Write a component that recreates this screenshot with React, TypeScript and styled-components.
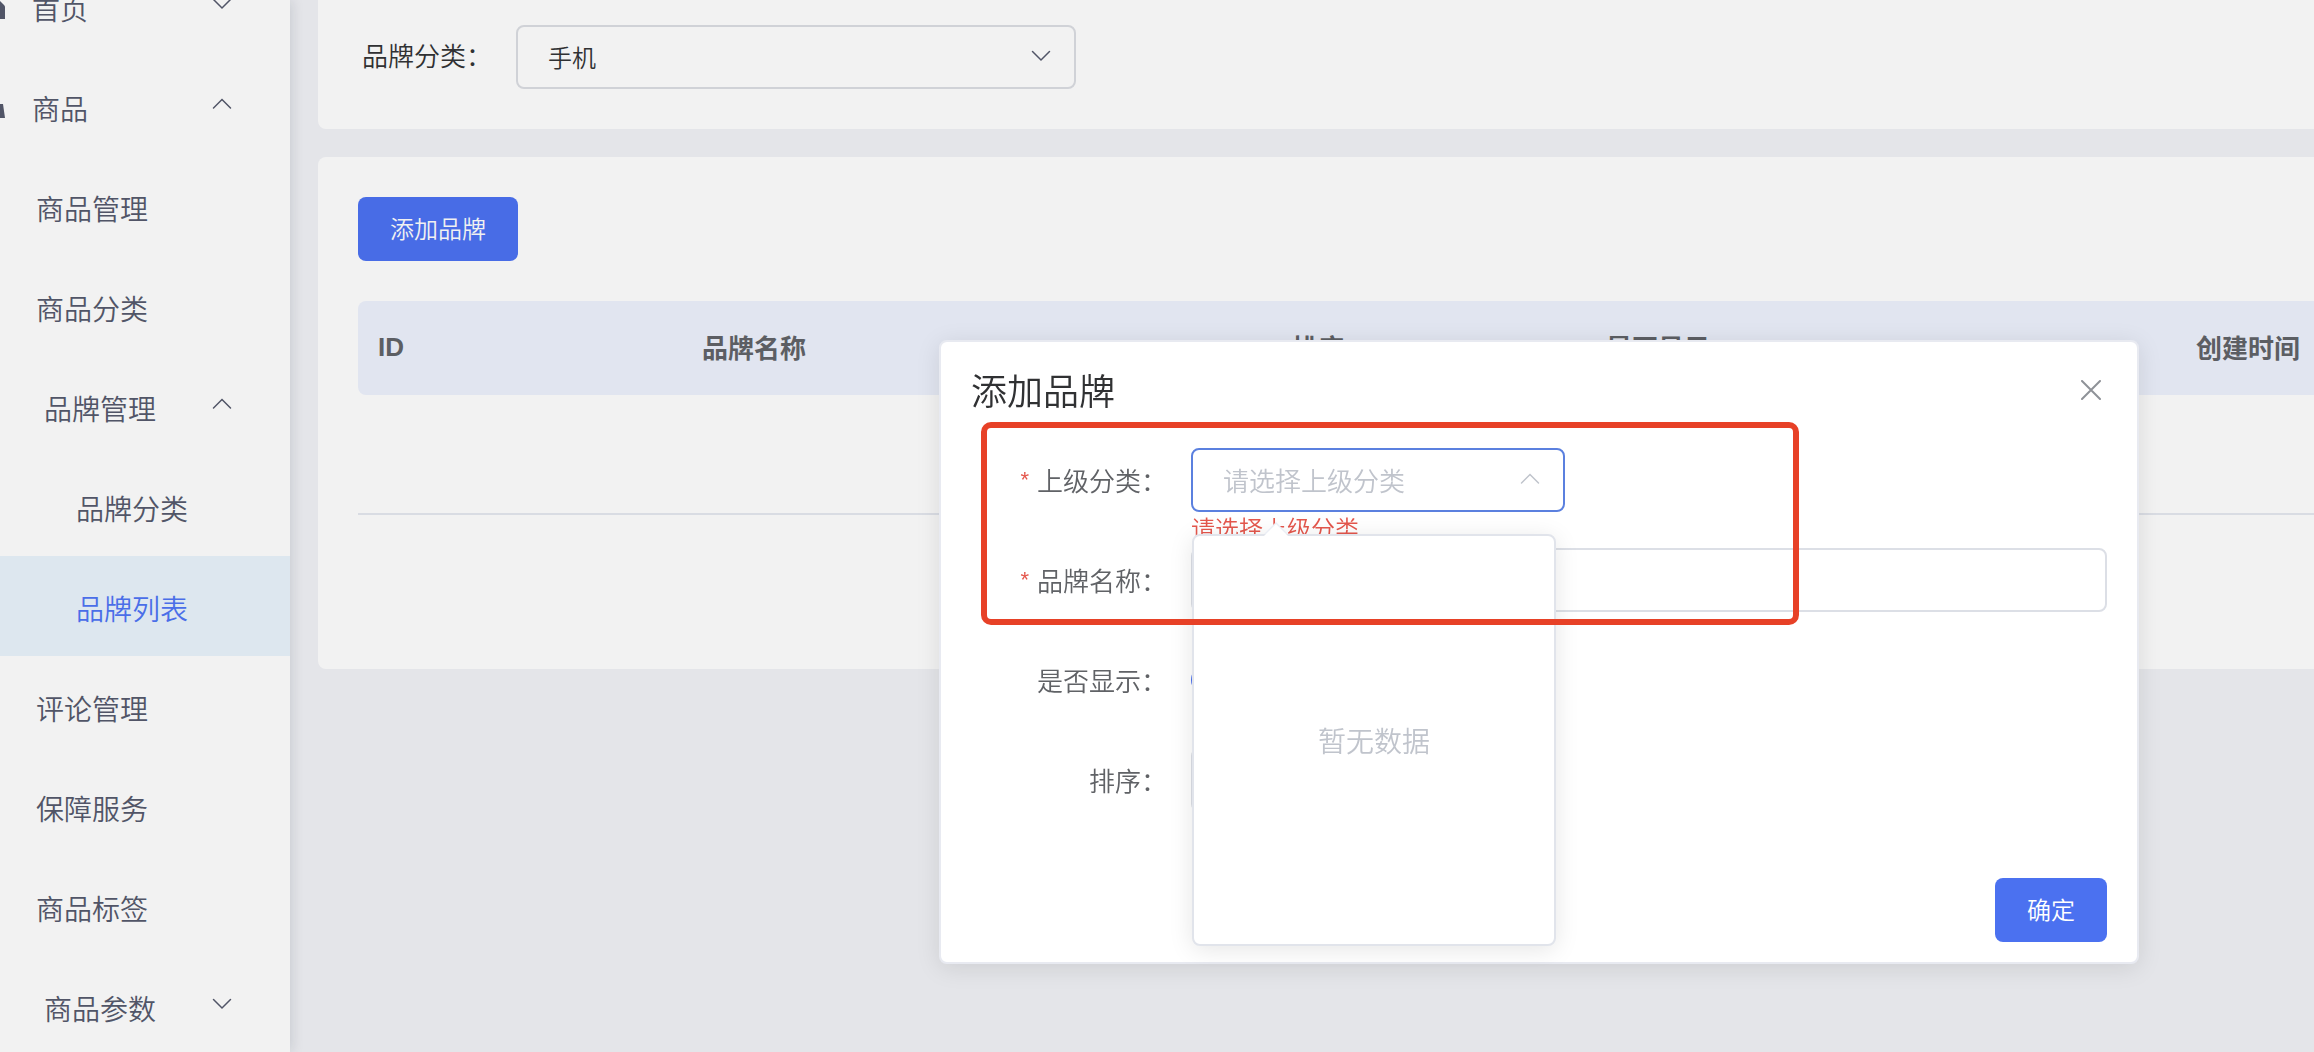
import React from "react";
import styled, { createGlobalStyle, css } from "styled-components";

const GlobalStyle = createGlobalStyle`
  *, *::before, *::after { box-sizing: border-box; }
  body {
    margin: 0;
    overflow: hidden;
    background: #e4e5e9;
    font-family: "Noto Sans CJK SC", "Liberation Sans", sans-serif;
    font-size: 26px;
    font-weight: 350;
    color: #303133;
  }
  button, input, select { font-family: inherit; font-weight: inherit; }
`;

const Page = styled.div`
  display: flex;
  height: 100vh;
  overflow: hidden;
`;

/* ---------- sidebar ---------- */

const Sidebar = styled.nav`
  flex: 0 0 290px;
  background: #f2f2f2;
  box-shadow: 2px 0 12px rgba(0, 21, 41, 0.12);
  overflow: hidden;
  z-index: 1;
`;

const MenuList = styled.ul`
  list-style: none;
  margin: -44px 0 0;
  padding: 0;
`;

const MenuLink = styled.a<{ $indent: number; $active?: boolean }>`
  display: flex;
  align-items: center;
  height: 100px;
  padding: 4px 58px 0 ${(p) => p.$indent}px;
  font-size: 28px;
  line-height: 40px;
  text-decoration: none;
  color: ${(p) => (p.$active ? "#4a6ee8" : "#515567")};
  background: ${(p) => (p.$active ? "#dde7ef" : "transparent")};
`;

const MenuIcon = styled.span`
  display: flex;
  justify-content: flex-end;
  width: 32px;
  padding-right: 27px;
  overflow: hidden;

  svg {
    flex-shrink: 0;
  }
`;

const MenuText = styled.span`
  flex: 1;
`;

const MenuArrow = styled.span`
  display: flex;
  padding-bottom: 8px;
`;

/* ---------- content ---------- */

const Content = styled.main`
  flex: 1;
  min-width: 0;
  display: flex;
  flex-direction: column;
  gap: 28px;
  padding-left: 28px;
`;

const Panel = styled.section`
  background: #f2f2f2;
`;

const FilterPanel = styled(Panel)`
  display: flex;
  align-items: center;
  gap: 24px;
  padding: 25px 40px 40px 44px;
  border-radius: 0 0 0 8px;
`;

const TablePanel = styled(Panel)`
  padding: 40px 0 154px 40px;
  border-radius: 8px 0 0 8px;
`;

const FilterLabel = styled.label`
  width: 130px;
  padding-bottom: 4px;
  line-height: 40px;
`;

const controlBox = css`
  height: 64px;
  border: 2px solid #dcdfe6;
  border-radius: 8px;
  background: transparent;
  outline: none;
`;

const SelectWrap = styled.div<{ $width: number }>`
  position: relative;
  display: flex;
  width: ${(p) => p.$width}px;
`;

const SelectBox = styled.select<{ $open?: boolean }>`
  ${controlBox}
  appearance: none;
  width: 100%;
  padding: 0 60px 2px 30px;
  font-size: ${(p) => (p.$open ? 26 : 24)}px;
  color: ${(p) => (p.$open ? "#c0c4cc" : "#303133")};
  border-color: ${(p) => (p.$open ? "#5b80df" : "#d0d2d7")};
`;

const SelectArrow = styled.span`
  position: absolute;
  right: 25px;
  top: 24px;
  display: flex;
  pointer-events: none;
`;

const PrimaryButton = styled.button<{ $dimmed?: boolean }>`
  height: 64px;
  padding: 0 32px 4px;
  border: 0;
  border-radius: 8px;
  font-size: 24px;
  color: ${(p) => (p.$dimmed ? "#f1f1f1" : "#ffffff")};
  background: ${(p) => (p.$dimmed ? "#486ce6" : "#4b71f0")};
`;

const DataTable = styled.table`
  width: 100%;
  margin-top: 40px;
  table-layout: fixed;
  border-collapse: separate;
  border-spacing: 0;
`;

const HeadCell = styled.th`
  height: 94px;
  padding: 0 0 2px 20px;
  background: #e1e5f0;
  text-align: left;
  font-size: 26px;
  line-height: 40px;
  font-weight: 700;
  color: #5c5e63;
  white-space: nowrap;
  &:first-child {
    border-radius: 8px 0 0 8px;
    font-family: "Liberation Sans", Arial, sans-serif;
  }
`;

const EmptyCell = styled.td`
  height: 120px;
  padding: 0;
  border-bottom: 2px solid #d9dce3;
`;

/* ---------- dialog ---------- */

const Overlay = styled.div`
  position: fixed;
  inset: 0;
  z-index: 2;
  display: flex;
  justify-content: flex-end;
  align-items: flex-start;
  padding: 340px 175px 0 0;
`;

const Dialog = styled.div`
  position: relative;
  width: 1200px;
  padding: 26px 30px 20px;
  background: #ffffff;
  border: 2px solid #e8eaf1;
  border-radius: 8px;
  box-shadow: 0 4px 24px rgba(0, 0, 0, 0.1);
`;

const DialogHeader = styled.header`
  display: flex;
  align-items: center;
  justify-content: space-between;
  height: 44px;
`;

const DialogTitle = styled.h2`
  margin: 0;
  padding-bottom: 2px;
  font-size: 36px;
  line-height: 44px;
  font-weight: inherit;
`;

const CloseButton = styled.button`
  display: flex;
  padding: 0 6px;
  border: 0;
  background: none;
`;

const Form = styled.form`
  display: flex;
  flex-direction: column;
  gap: 36px;
  padding-top: 36px;
`;

const FormRow = styled.div`
  display: flex;
  align-items: center;
  height: 64px;
`;

const FormLabel = styled.label`
  width: 220px;
  padding-right: 24px;
  text-align: right;
  line-height: 40px;
  white-space: nowrap;
  color: #606266;
`;

const Required = styled.span`
  margin-right: 8px;
  font-family: "Liberation Sans", Arial, sans-serif;
  font-size: 22px;
  line-height: 22px;
  vertical-align: 4px;
  color: #e4574d;
`;

const TextInput = styled.input`
  ${controlBox}
  flex: 1;
  padding: 0 30px;
  font-size: 26px;
`;

const NumberInput = styled.input`
  ${controlBox}
  width: 360px;
  text-align: center;
  font-size: 26px;
`;

const Radio = styled.input`
  appearance: none;
  width: 28px;
  height: 28px;
  margin: 0;
  border: 8px solid #4b71f0;
  border-radius: 50%;
`;

const FieldError = styled.p`
  position: absolute;
  top: 100%;
  left: 0;
  margin: 0;
  padding-top: 4px;
  font-size: 24px;
  line-height: 24px;
  white-space: nowrap;
  color: #e4574d;
`;

const Dropdown = styled.div`
  position: absolute;
  z-index: 1;
  top: 86px;
  left: 1px;
  display: flex;
  align-items: center;
  justify-content: center;
  width: 364px;
  height: 412px;
  background: #ffffff;
  border: 2px solid #e1e4eb;
  border-radius: 8px;
  box-shadow: 0 4px 24px rgba(0, 0, 0, 0.1);
  font-size: 28px;
  line-height: 40px;
  color: #c0c4cc;
  &::before,
  &::after {
    content: "";
    position: absolute;
    left: 70px;
    border: 12px solid transparent;
    border-top-width: 0;
  }
  &::before {
    top: -14px;
    border-bottom-color: #ebeef5;
  }
  &::after {
    top: -12px;
    border-bottom-color: #ffffff;
  }
`;

const DialogFooter = styled.footer`
  display: flex;
  justify-content: flex-end;
  padding-top: 66px;
`;

const Highlight = styled.div`
  position: absolute;
  z-index: 2;
  top: 80px;
  left: 40px;
  width: 818px;
  height: 203px;
  border: 6px solid #e74127;
  border-radius: 10px;
  pointer-events: none;
`;

/* ---------- drawings ---------- */

const Chevron = ({ up, color }: { up?: boolean; color: string }) => (
  <svg width="20" height="14" viewBox="0 0 20 14" fill="none" stroke={color} strokeWidth="1.5" strokeLinecap="round">
    <path d={up ? "M1.5 11 L10 2.5 L18.5 11" : "M1.5 2.5 L10 11 L18.5 2.5"} />
  </svg>
);

const CloseIcon = () => (
  <svg width="20" height="20" viewBox="0 0 20 20" stroke="#8f9298" strokeWidth="2" strokeLinecap="round">
    <path d="M1 1 L19 19 M19 1 L1 19" />
  </svg>
);

const HomeIcon = () => (
  <svg width="28" height="28" viewBox="0 0 28 28" fill="#515567">
    <path d="M14 0 L23 7 L27 11 Q28 12 28 13 V25 H17 V17 H11 V25 H0 V13 Q0 12 1 11 L5 7 Z" />
  </svg>
);

const GoodsIcon = () => (
  <svg width="28" height="28" viewBox="0 0 28 28" fill="#515567">
    <path d="M2 10 H26 L28 24 H0 Z M8 10 V6 A6 6 0 0 1 20 6 V10 H18 V6 A4 4 0 0 0 10 6 V10 Z" />
  </svg>
);

type MenuEntry = {
  text: string;
  indent: number;
  arrow?: "up" | "down";
  icon?: React.ReactNode;
  active?: boolean;
};

const menu: MenuEntry[] = [
  { text: "首页", indent: 0, arrow: "down", icon: <HomeIcon /> },
  { text: "商品", indent: 0, arrow: "up", icon: <GoodsIcon /> },
  { text: "商品管理", indent: 36 },
  { text: "商品分类", indent: 36 },
  { text: "品牌管理", indent: 44, arrow: "up" },
  { text: "品牌分类", indent: 76 },
  { text: "品牌列表", indent: 76, active: true },
  { text: "评论管理", indent: 36 },
  { text: "保障服务", indent: 36 },
  { text: "商品标签", indent: 36 },
  { text: "商品参数", indent: 44, arrow: "down" },
];

const columns = [
  { title: "ID", width: "324px" },
  { title: "品牌名称", width: "590px" },
  { title: "排序", width: "314px" },
  { title: "是否显示", width: "590px" },
  { title: "创建时间", width: "auto" },
];

export default function App() {
  return (
    <>
      <GlobalStyle />
      <Page>
        <Sidebar>
          <MenuList>
            {menu.map((m) => (
              <li key={m.text}>
                <MenuLink href="#" $indent={m.indent} $active={m.active}>
                  {m.icon && <MenuIcon>{m.icon}</MenuIcon>}
                  <MenuText>{m.text}</MenuText>
                  {m.arrow && (
                    <MenuArrow>
                      <Chevron up={m.arrow === "up"} color="#515567" />
                    </MenuArrow>
                  )}
                </MenuLink>
              </li>
            ))}
          </MenuList>
        </Sidebar>

        <Content>
          <FilterPanel>
            <FilterLabel htmlFor="category">品牌分类：</FilterLabel>
            <SelectWrap $width={560}>
              <SelectBox id="category" defaultValue="phone">
                <option value="phone">手机</option>
              </SelectBox>
              <SelectArrow>
                <Chevron color="#515567" />
              </SelectArrow>
            </SelectWrap>
          </FilterPanel>

          <TablePanel>
            <PrimaryButton type="button" $dimmed>
              添加品牌
            </PrimaryButton>
            <DataTable>
              <colgroup>
                {columns.map((c) => (
                  <col key={c.title} style={{ width: c.width }} />
                ))}
              </colgroup>
              <thead>
                <tr>
                  {columns.map((c) => (
                    <HeadCell key={c.title}>{c.title}</HeadCell>
                  ))}
                </tr>
              </thead>
              <tbody>
                <tr>
                  <EmptyCell colSpan={columns.length} />
                </tr>
              </tbody>
            </DataTable>
          </TablePanel>
        </Content>
      </Page>

      <Overlay>
        <Dialog role="dialog" aria-labelledby="dialog-title">
          <DialogHeader>
            <DialogTitle id="dialog-title">添加品牌</DialogTitle>
            <CloseButton type="button" aria-label="关闭">
              <CloseIcon />
            </CloseButton>
          </DialogHeader>
          <Form>
            <FormRow>
              <FormLabel htmlFor="parent">
                <Required>*</Required>上级分类：
              </FormLabel>
              <SelectWrap $width={374}>
                <SelectBox id="parent" $open defaultValue="">
                  <option value="">请选择上级分类</option>
                </SelectBox>
                <SelectArrow>
                  <Chevron up color="#c0c4cc" />
                </SelectArrow>
                <FieldError>请选择上级分类</FieldError>
                <Dropdown>暂无数据</Dropdown>
              </SelectWrap>
            </FormRow>
            <FormRow>
              <FormLabel htmlFor="name">
                <Required>*</Required>品牌名称：
              </FormLabel>
              <TextInput id="name" type="text" />
            </FormRow>
            <FormRow>
              <FormLabel htmlFor="visible">是否显示：</FormLabel>
              <Radio id="visible" type="radio" defaultChecked />
            </FormRow>
            <FormRow>
              <FormLabel htmlFor="sort">排序：</FormLabel>
              <NumberInput id="sort" type="number" />
            </FormRow>
          </Form>
          <DialogFooter>
            <PrimaryButton type="button">确定</PrimaryButton>
          </DialogFooter>
          <Highlight />
        </Dialog>
      </Overlay>
    </>
  );
}
